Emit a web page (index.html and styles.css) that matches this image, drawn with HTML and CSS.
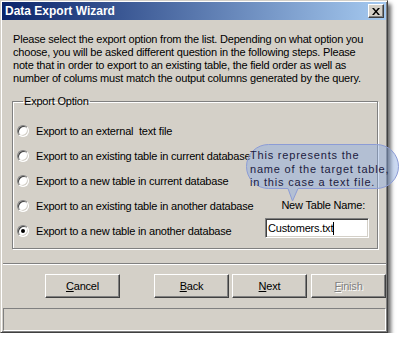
FILE: index.html
```html
<!DOCTYPE html>
<html lang="en">
<head>
    <meta charset="UTF-8">
    <title>Data Export Wizard</title>
    <link rel="stylesheet" href="styles.css">
</head>
<body>
    <div class="window">
        <div class="titlebar">
            <span class="title">Data Export Wizard</span>
            <span class="close">
                <svg width="8" height="7" viewBox="0 0 8 7"><path d="M0 0h2l2 2.5L6 0h2L5 3.5 8 7H6L4 4.5 2 7H0l3-3.5z" fill="#000"/></svg>
            </span>
        </div>

        <div class="main">
            <p class="intro">Please select the export option from the list. Depending on what option you<br>choose, you will be asked different question in the following steps. Please<br>note that in order to export to an existing table, the field order as well as<br>number of colums must match the output columns generated by the query.</p>

            <fieldset class="group">
                <legend>Export Option</legend>
                <div class="options">
                    <div class="option"><span class="radio"></span>Export to an external&nbsp; text file</div>
                    <div class="option"><span class="radio"></span>Export to an existing table in current database</div>
                    <div class="option"><span class="radio"></span>Export to a new table in current database</div>
                    <div class="option"><span class="radio"></span>Export to an existing table in another database</div>
                    <div class="option"><span class="radio checked"></span>Export to a new table in another database</div>
                </div>
                <div class="target">
                    <div class="target-label">New Table Name:</div>
                    <div class="textbox">Customers.txt<span class="caret"></span></div>
                </div>
            </fieldset>
        </div>

        <div class="separator"></div>

        <div class="buttons">
            <div class="btn cancel"><u>C</u>ancel</div>
            <div class="btn"><u>B</u>ack</div>
            <div class="btn"><u>N</u>ext</div>
            <div class="btn disabled"><u>F</u>inish</div>
        </div>

        <div class="statusbar"></div>

        <!-- callout over the dialog -->
        <div class="callout">
            <svg width="154" height="60" viewBox="0 0 154 60">
                <path d="M22.5 0.5H130.5A22 22 0 0 1 152.5 22.5A22 22 0 0 1 130.5 44.5H52L46.5 57L42 44.5H22.5A22 22 0 0 1 0.5 22.5A22 22 0 0 1 22.5 0.5Z" fill="rgba(140,170,225,0.45)" stroke="#8c9cd6"/>
            </svg>
            <div class="callout-text">This represents the<br>name of the target table,<br>in this case a text file.</div>
        </div>
    </div>
</body>
</html>
```

FILE: styles.css
```css
body {
    margin: 0;
    background-color: #fff;
    font-family: "Liberation Sans", Arial, sans-serif;
    font-size: 11px;
    letter-spacing: -0.2px;
    color: #000;
}
.window {
    position: relative;
    width: 388px;
    box-sizing: border-box;
    display: flex;
    flex-direction: column;
    padding: 1px;
    background-color: #d4d0c8;
    border: 1px solid;
    border-color: #d4d0c8 #404040 #404040 #d4d0c8;
    box-shadow: inset 1px 1px #fff, inset -1px -1px #808080, 3px 4px 4px rgba(0, 0, 0, 0.6);
}
.titlebar {
    height: 18px;
    display: flex;
    align-items: center;
    justify-content: space-between;
    padding: 0 2px 0 3px;
    background: linear-gradient(to right, #0a246a, #a6caf0);
}
.title {
    color: #fff;
    font-weight: bold;
    font-size: 12px;
    letter-spacing: 0;
}
.close {
    width: 16px;
    height: 14px;
    box-sizing: border-box;
    display: flex;
    align-items: center;
    justify-content: center;
    background-color: #d4d0c8;
    border: 1px solid;
    border-color: #fff #404040 #404040 #fff;
    box-shadow: inset -1px -1px #808080;
}
.main {
    padding: 0 8px 0 10px;
}
.intro {
    margin: 13px 0 0 1px;
    line-height: 13px;
    white-space: nowrap;
}
.group {
    margin: 10px 0 0 0;
    padding: 10px 8px 5px 4px;
    display: flex;
    align-items: flex-end;
    justify-content: space-between;
    border: 1px solid #808080;
    box-shadow: 1px 1px #fff, inset 1px 1px #fff;
}
.group legend {
    padding: 0 1px;
    margin-left: 6px;
    line-height: 13px;
}
.option {
    height: 25px;
    display: flex;
    align-items: center;
}
.radio {
    position: relative;
    width: 12px;
    height: 12px;
    box-sizing: border-box;
    margin-right: 7px;
    border-radius: 50%;
    background-color: #fff;
    border: 1px solid;
    border-color: #808080 #fff #fff #808080;
    box-shadow: inset 1px 1px #404040, inset -1px -1px #d4d0c8;
}
.radio.checked::after {
    content: "";
    position: absolute;
    left: 3px;
    top: 3px;
    width: 4px;
    height: 4px;
    border-radius: 50%;
    background-color: #000;
}
.target {
    display: flex;
    flex-direction: column;
    align-items: flex-end;
    margin-bottom: 5px;
}
.target-label {
    height: 25px;
    line-height: 25px;
    margin-right: 4px;
}
.textbox {
    width: 104px;
    height: 20px;
    box-sizing: border-box;
    padding: 0 2px;
    background-color: #fff;
    border: 1px solid;
    border-color: #808080 #fff #fff #808080;
    box-shadow: inset 1px 1px #404040, inset -1px -1px #d4d0c8;
    display: flex;
    align-items: center;
}
.caret {
    display: inline-block;
    width: 1px;
    height: 13px;
    background-color: #000;
}
.separator {
    margin: 14px 0 0 1px;
    height: 1px;
    background-color: #808080;
    border-bottom: 1px solid #fff;
}
.buttons {
    display: flex;
    justify-content: flex-end;
    gap: 3px;
    margin-top: 9px;
}
.btn {
    width: 75px;
    height: 24px;
    box-sizing: border-box;
    display: flex;
    align-items: center;
    justify-content: center;
    border: 1px solid;
    border-color: #fff #404040 #404040 #fff;
    box-shadow: inset -1px -1px #808080;
}
.btn.cancel {
    margin-right: 31px;
}
.btn.disabled {
    margin-left: 1px;
    color: #808080;
    text-shadow: 1px 1px #fff;
}
.statusbar {
    margin: 10px 0 0 1px;
    height: 23px;
    box-sizing: border-box;
    border: 1px solid;
    border-color: #808080 #fff #fff #808080;
}
.callout {
    position: absolute;
    left: 245px;
    top: 143px;
    width: 154px;
    height: 60px;
}
.callout svg {
    display: block;
}
.callout-text {
    position: absolute;
    left: 4px;
    top: 5px;
    line-height: 13.5px;
    letter-spacing: 0.8px;
    color: #1c2040;
    white-space: nowrap;
}
```
